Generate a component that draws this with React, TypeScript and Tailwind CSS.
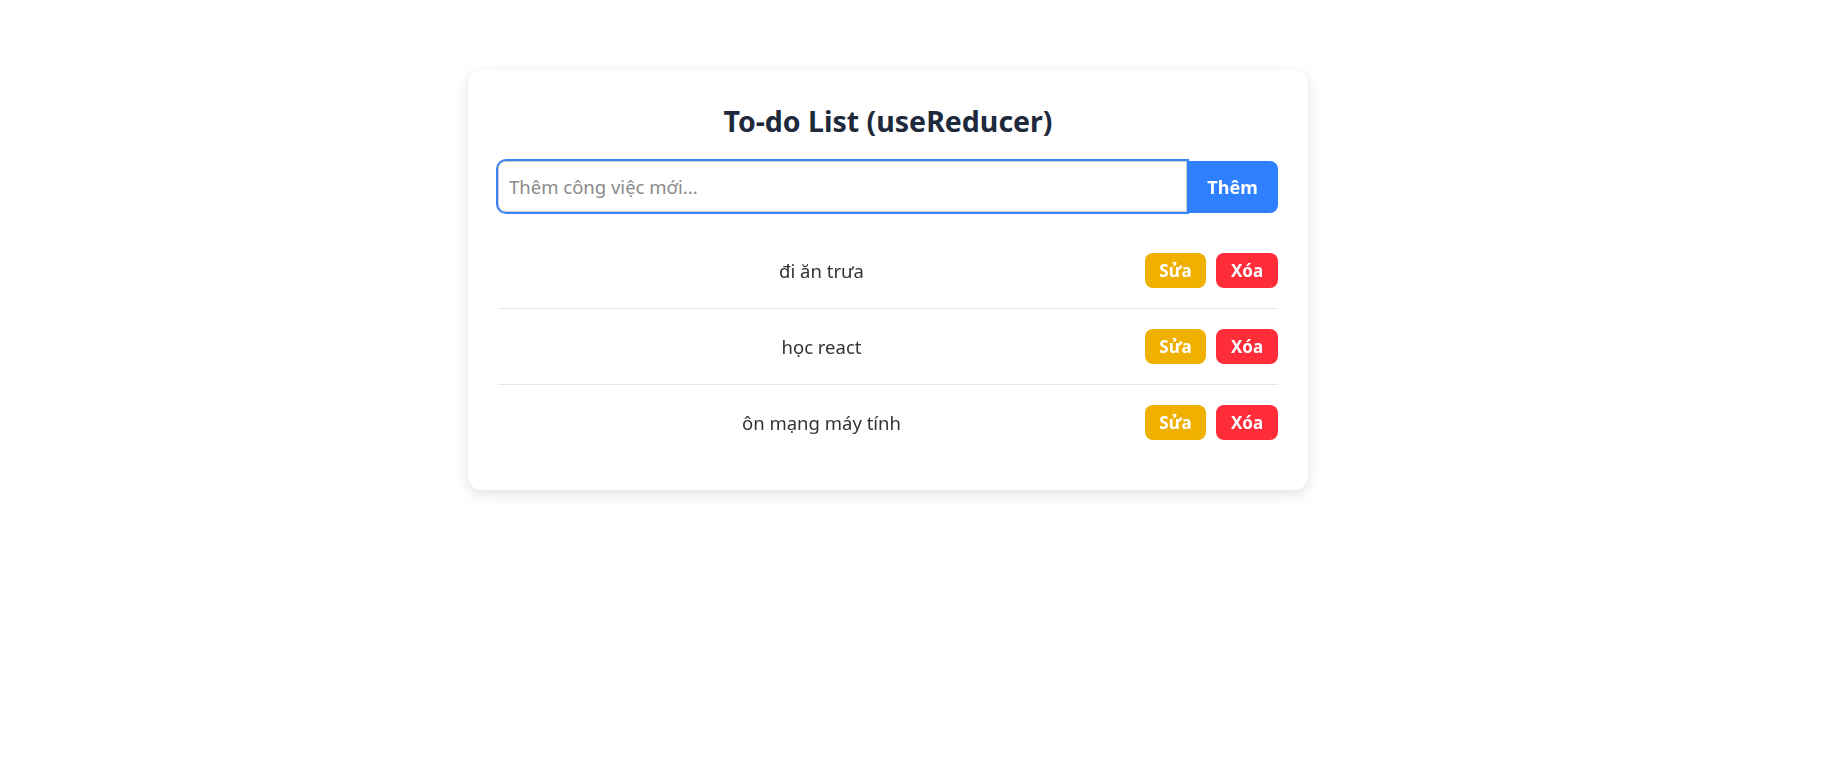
import { useState } from 'react';

const todos = [
  { id: 1, text: 'đi ăn trưa' },
  { id: 2, text: 'học react' },
  { id: 3, text: 'ôn mạng máy tính' },
];

export default function App() {
  const [value, setValue] = useState('');

  return (
    <div
      className="min-h-screen bg-white pt-[70px] pl-[468px]"
      style={{ fontFamily: '"Noto Sans", "Open Sans", sans-serif' }}
    >
      <div className="w-[840px] rounded-[14px] bg-white px-[30px] pt-[31px] pb-[30px] shadow-[0_4px_14px_rgba(0,0,0,0.12)]">
        <h2 className="mb-[20px] text-center text-[28.5px] font-bold leading-[40px] text-[#1e293b]">
          To-do List (useReducer)
        </h2>

        <div className="flex h-[52px]">
          <input
            autoFocus
            value={value}
            onChange={(e) => setValue(e.target.value)}
            placeholder="Thêm công việc mới..."
            className="h-[51px] flex-1 rounded-l-[8px] border border-[#cccccc] pl-[10px] text-[18.5px] text-[#333] outline-2 outline-[#3b82f6] placeholder:text-[#8a8a8a]"
          />
          <button className="w-[91px] rounded-r-[8px] bg-[#2f80ff] text-[18px] font-bold text-white">
            Thêm
          </button>
        </div>

        <ul className="mt-[20px]">
          {todos.map((t, i) => (
            <li
              key={t.id}
              className={`flex items-center py-[20px] ${i < todos.length - 1 ? 'border-b border-[#e5e5e5]' : ''}`}
            >
              <span className="flex-1 text-center text-[18.5px] text-[#333]">{t.text}</span>
              <div className="flex gap-[10px]">
                <button className="h-[35px] w-[61px] rounded-[8px] bg-[#f0b000] text-[17px] font-bold text-white">
                  Sửa
                </button>
                <button className="h-[35px] w-[62px] rounded-[8px] bg-[#ff2d3a] text-[17px] font-bold text-white">
                  Xóa
                </button>
              </div>
            </li>
          ))}
        </ul>
      </div>
    </div>
  );
}
